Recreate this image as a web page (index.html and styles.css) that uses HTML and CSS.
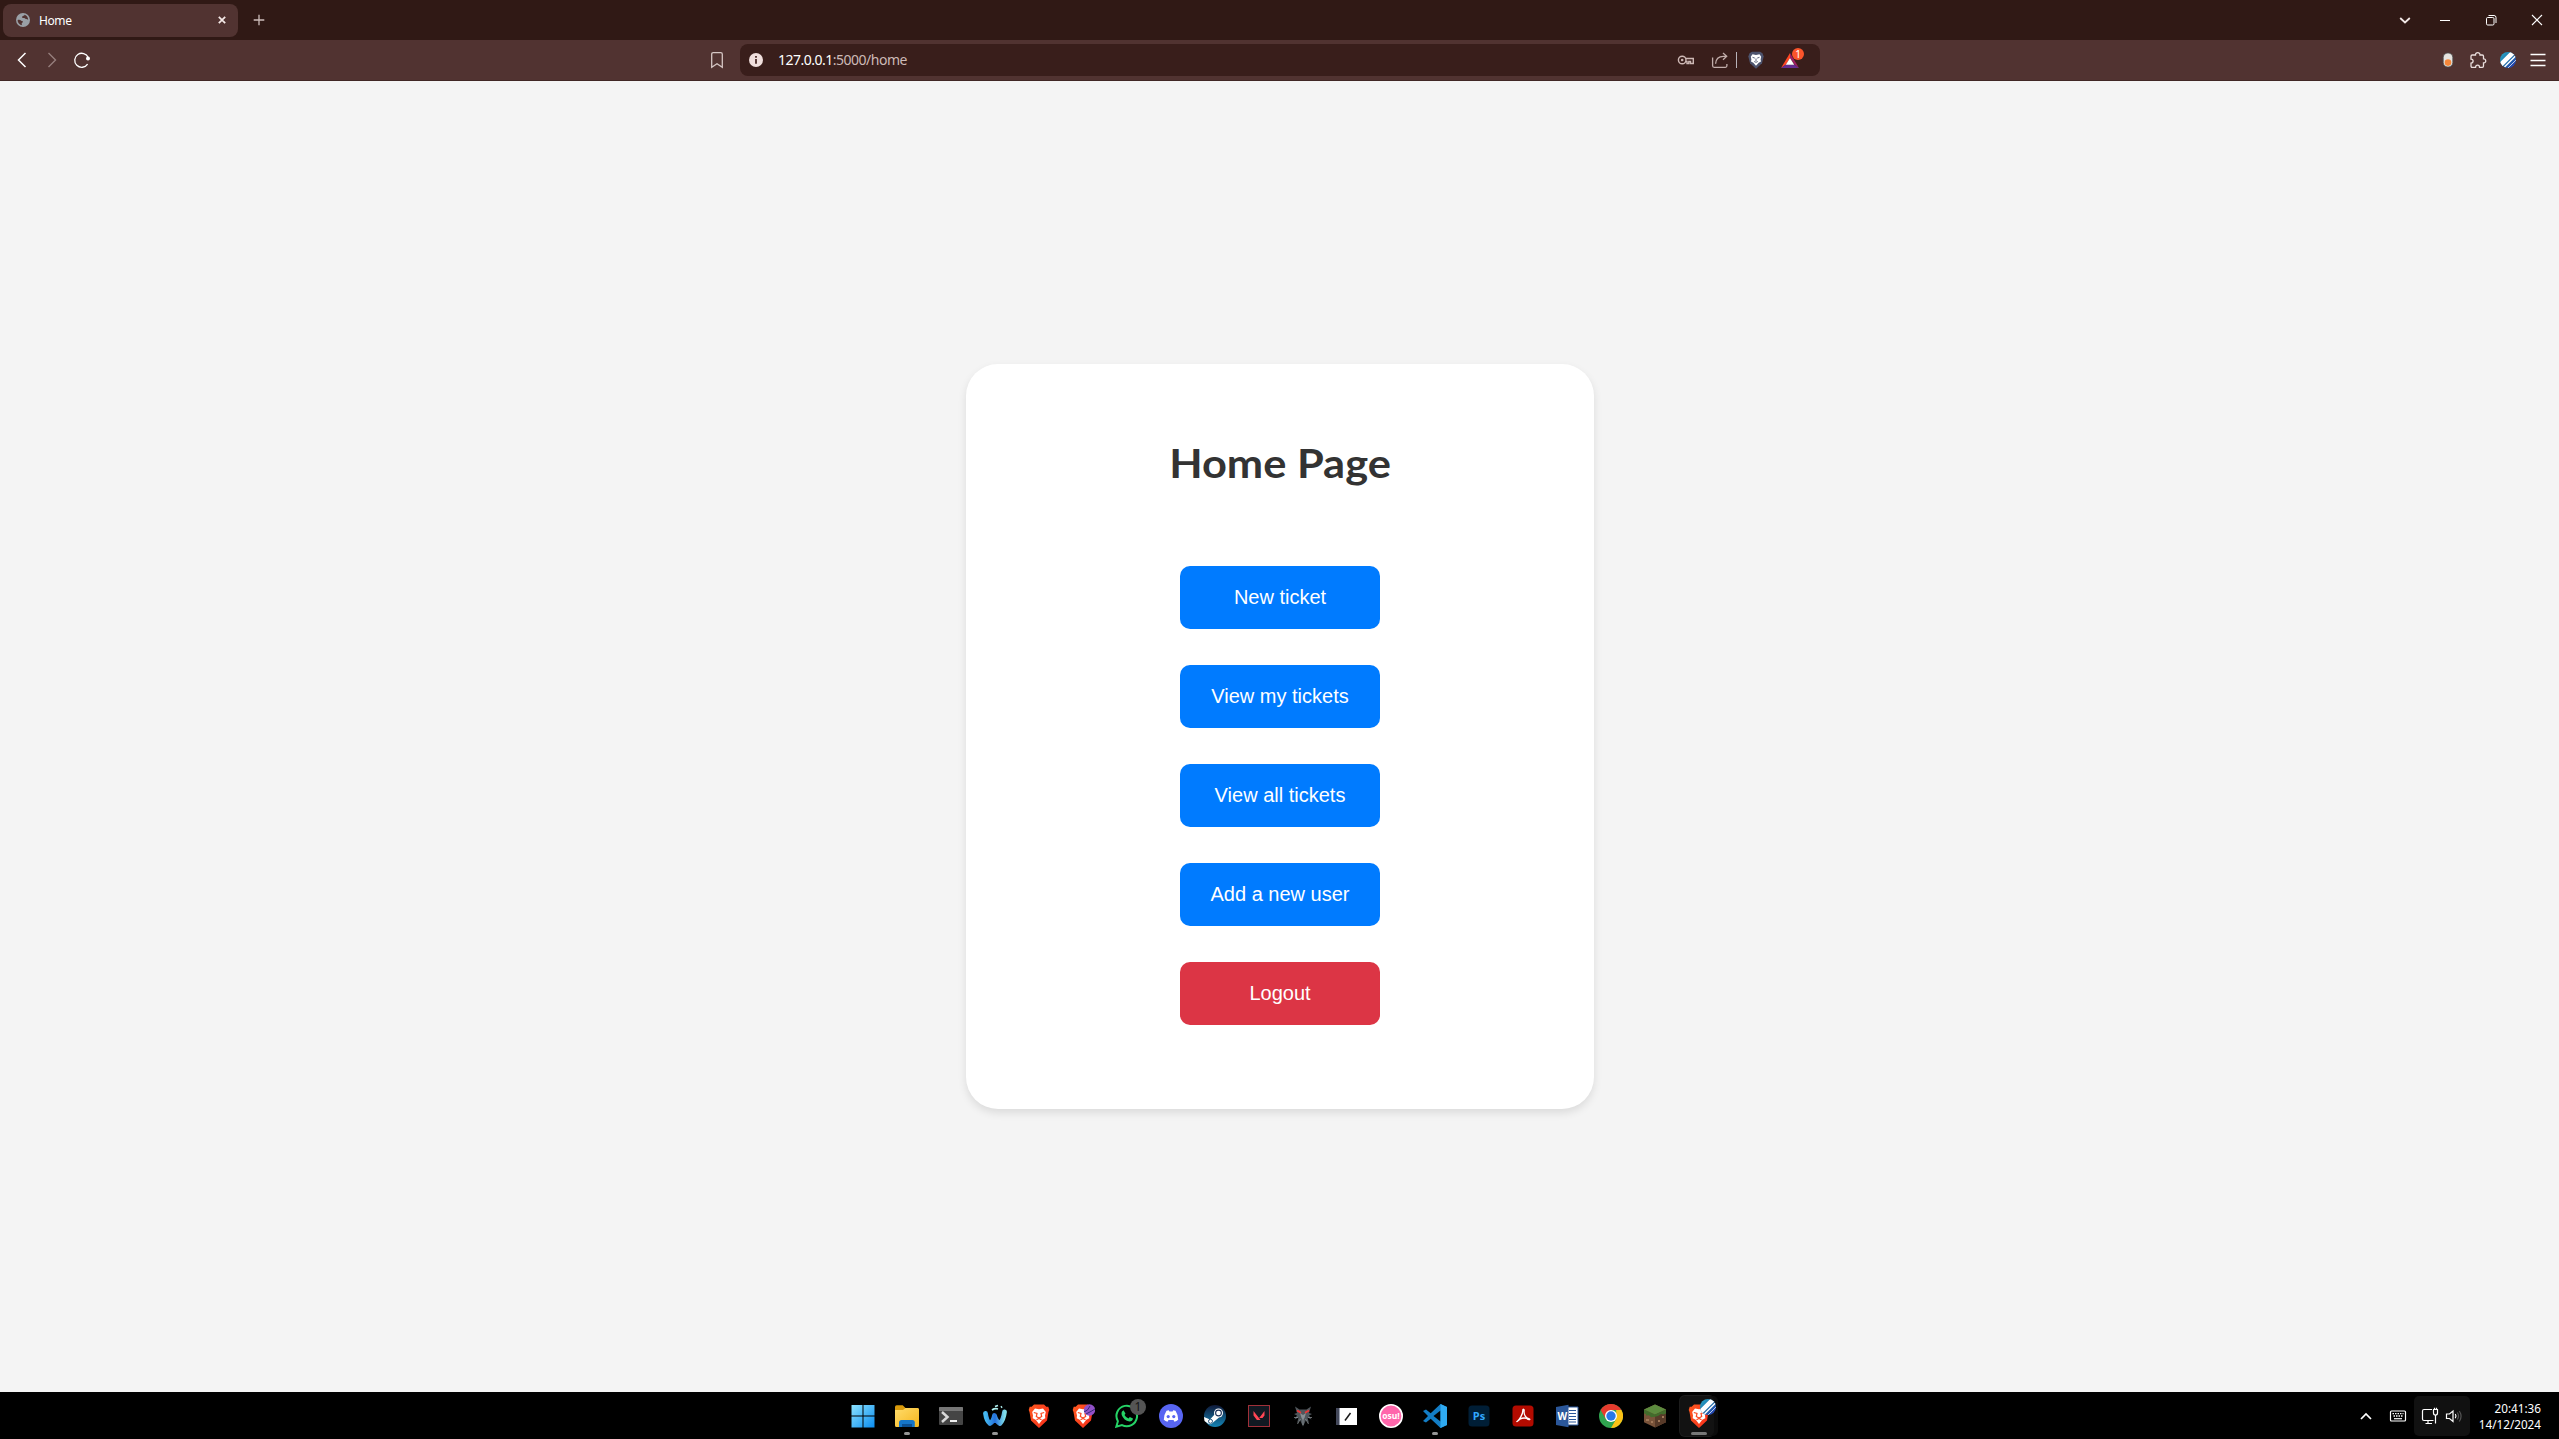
FILE: index.html
```
<!DOCTYPE html>
<html lang="en">
<head>
<meta charset="utf-8">
<title>Home</title>
<link rel="stylesheet" href="styles.css">
</head>
<body>
<header class="tabs">
  <div class="tab">
    <svg class="tab-icon" viewBox="0 0 14 14"><circle cx="7" cy="7" r="7" fill="#9aa0a6"/><path d="M1.600 7C3 6.600 4.300 6.700 5 7.500s1.900.3 1.900 1.300-1.200.9-1.200 1.900.3 1 .5 1.600C3.500 12 1.600 9.800 1.600 7zM8.600 1.800C8.300 3 7 2.800 6.300 3.600s.2 1.600 1.200 1.500c1-.1 1.300.6 2.200.8 1 .2 1.700.2 2.500.9-.2-2.500-1.500-4.300-3.600-5z" fill="#513331"/></svg>
    <span class="tab-title">Home</span>
    <svg class="tab-close" viewBox="0 0 8 8"><path d="M.8.8l6.400 6.400M7.200.8L.8 7.200" stroke="#f5e9e7" stroke-width="1.700"/></svg>
  </div>
  <svg class="new-tab" viewBox="0 0 12 12"><path d="M6 .7v10.600M.7 6h10.600" stroke="#cdbdbb" stroke-width="1.300"/></svg>
  <div class="controls">
    <svg viewBox="0 0 12 12"><path d="M1.200 4L6 8.500 10.800 4" fill="none" stroke="#f3e9e8" stroke-width="1.800"/></svg>
    <svg viewBox="0 0 12 12"><path d="M1 6.500h10" stroke="#fff"/></svg>
    <svg viewBox="0 0 12 12" fill="none" stroke="#fff"><rect x="1.500" y="3.500" width="7.500" height="7.500" rx="1.200"/><path d="M3.500 1.500H9a2 2 0 0 1 2 2V9"/></svg>
    <svg viewBox="0 0 12 12"><path d="M1 1l10 10M11 1L1 11" stroke="#fff" stroke-width="1.100"/></svg>
  </div>
</header>

<nav class="toolbar">
  <div class="nav-icons">
    <svg viewBox="0 0 18 18"><path d="M12.500 2L5.500 9l7 7" fill="none" stroke="#fff" stroke-width="1.500"/></svg>
    <svg viewBox="0 0 18 18"><path d="M5.500 2l7 7-7 7" fill="none" stroke="#967f7d" stroke-width="1.400"/></svg>
    <svg viewBox="0 0 18 18"><path d="M14.600 13.100A7 7 0 1 1 15.200 6.600" fill="none" stroke="#fff" stroke-width="1.300"/><circle cx="15" cy="7.600" r="2" fill="#fff"/></svg>
  </div>
  <svg class="bookmark" viewBox="0 0 18 18"><path d="M3.700 3.200q0-1.500 1.500-1.500h7.600q1.500 0 1.500 1.500v13L9 12.800l-5.300 3.400z" fill="none" stroke="#d5c6c4" stroke-width="1.300"/></svg>
  <div class="address">
    <svg class="info" viewBox="0 0 14 14"><circle cx="7" cy="7" r="7" fill="#f0dfdd"/><path d="M7 6v4.800M7 3v1.700" stroke="#4a2b28" stroke-width="1.800"/></svg>
    <span class="url"><b>127.0.0.1</b>:5000/home</span>
    <svg class="key" viewBox="0 0 18 18" fill="none" stroke="#cdb8b5" stroke-width="1.400"><circle cx="5.200" cy="9" r="3.800"/><circle cx="5.200" cy="9" r=".6" /><path d="M8.700 7.500h7.600v5h-2.800V10.500h-1.700v2H10v-2H8.700"/></svg>
    <svg class="share" viewBox="0 0 18 18" fill="none" stroke="#c2aeab" stroke-width="1.300"><path d="M1.600 6.500v8.300q0 1.500 1.500 1.500h11.300q1.500 0 1.500-1.500V13M4.600 12.800C4.800 8 8 5.300 12.500 5.300h3M12 1.900l3.700 3.400-3.700 3.500"/></svg>
    <i class="divider"></i>
    <svg class="shield" viewBox="0 0 18 18"><path d="M5 .8h8l2.500 1.500 1.200 3.200-1.700 6.800L9 17.800l-6-5.500L1.300 5.500l1.200-3.200z" fill="#4d536d"/><path d="M5.500 3.300L9 4l3.500-.7 1.700 2.500-.6 2.700.4 2-2.300 1.200L9 14.800l-2.700-3.100L4 10.500l.4-2-.6-2.700z" fill="#fff"/><path d="M5.500 6.300l2.300.8M12.500 6.300l-2.300.8M7.200 10.500L9 11.300l1.800-.8M9 7.500v2.500" fill="none" stroke="#4d536d" stroke-width=".9"/></svg>
    <svg class="rewards" viewBox="0 0 26 26"><path d="M11 6L2 21l5-3.500 4-6.500z" fill="#ff4724"/><path d="M2 21h18l-4.500-3.500H7z" fill="#662d91"/><path d="M11 6l9 15-4.500-3.500L11 11z" fill="#9e1f63"/><path d="M11 11l4.200 6.700H6.800z" fill="#fff"/><circle cx="19" cy="7" r="6" fill="#fb542b"/><text x="19" y="10.500" text-anchor="middle" class="badge-text">1</text></svg>
  </div>
  <div class="extensions">
    <svg viewBox="0 0 18 18"><rect x="4.200" y="2" width="9.600" height="14" rx="4.600" fill="#e5e3df" stroke="#4b5150" stroke-width=".8"/><circle cx="9" cy="11.600" r="3.300" fill="#f5873a"/></svg>
    <svg viewBox="0 0 18 18"><path d="M2 5.200q0-1.200 1.200-1.200H6.500C6.200.8 11.200.8 11 4h2.300q1.200 0 1.200 1.200v2.600c3-.2 3 4.400 0 4.200v3q0 1.300-1.200 1.300H10.500c0-2.800-3.800-2.800-3.900 0H3.200Q2 16.300 2 15v-2.800c2.800-.2 2.800-4 0-4.100z" fill="none" stroke="#eadfdd" stroke-width="1.300"/></svg>
    <svg viewBox="0 0 18 18"><use href="#profile"/></svg>
    <svg viewBox="0 0 18 18"><path d="M1.500 3.500h15M1.500 9.500h15M1.500 14.500h15" stroke="#fff" stroke-width="1.300"/></svg>
  </div>
</nav>

<main class="page">
  <section class="card">
    <h1>Home Page</h1>
    <div class="actions">
      <a class="btn">New ticket</a>
      <a class="btn">View my tickets</a>
      <a class="btn">View all tickets</a>
      <a class="btn">Add a new user</a>
      <a class="btn logout">Logout</a>
    </div>
  </section>
</main>

<footer class="taskbar">
  <svg class="defs" width="0" height="0">
    <defs>
      <linearGradient id="win" x2="1" y2="1"><stop stop-color="#8ce3ff"/><stop offset="1" stop-color="#0a8cf0"/></linearGradient>
      <linearGradient id="fold" x2="1" y2="1"><stop stop-color="#ffdc6b"/><stop offset="1" stop-color="#f5b51c"/></linearGradient>
      <linearGradient id="wave" x2="1"><stop stop-color="#45b8f0"/><stop offset=".5" stop-color="#2470dc"/><stop offset="1" stop-color="#7fdce9"/></linearGradient>
      <linearGradient id="orange" x2="1" y2=".6"><stop stop-color="#ff5a20"/><stop offset="1" stop-color="#f8331c"/></linearGradient>
      <linearGradient id="steamg" x2="0" y2="1"><stop stop-color="#101a3a"/><stop offset="1" stop-color="#1484b5"/></linearGradient>
      <linearGradient id="profg" x2="1" y2="1"><stop stop-color="#2aaed0"/><stop offset=".5" stop-color="#1c6fa5"/><stop offset="1" stop-color="#2a32b8"/></linearGradient>
      <clipPath id="round"><circle cx="9" cy="9" r="8"/></clipPath>
      <g id="profile"><circle cx="9" cy="9" r="8" fill="url(#profg)"/><g clip-path="url(#round)" stroke="#fff"><path d="M0 15.500L14.500 1" stroke-width="4.600"/><path d="M5.500 16L17 4.500" stroke-width="1.500"/><path d="M9 17L18 8" stroke-width=".7"/></g></g>
      <g id="lion"><path d="M7 .5h10l2.300 2.300 2-.1 1 3.300-.8 2-1.500 8.500L12 24l-8-7.500L2.500 8l-.8-2 1-3.300 2 .1z" fill="url(#orange)"/><path d="M8 4.500l4 .8 4-.8L18.800 8l-.8 3.500.3 2.700-3 1.600L12 20l-3.300-4.200-3-1.600.3-2.700L5.200 8z" fill="#fff"/><path d="M6.800 8.500l3.200 1-.7 3 2.700 1.500 2.700-1.500-.7-3 3.200-1M9.500 15.800l2.500-1.300 2.500 1.300" fill="none" stroke="#fb4922" stroke-width="1.200"/></g>
    </defs>
  </svg>
  <div class="apps">
    <div class="app"><svg viewBox="0 0 24 24"><path d="M.5 1H11.500V11.500H.5zM12.500 1H23.500V11.500H12.500zM.5 12.500H11.500V23.500H.5zM12.500 12.500H23.500V23.500H12.500z" fill="url(#win)"/></svg></div>
    <div class="app"><svg viewBox="0 0 24 24"><path d="M0 3q0-1.700 1.700-1.700h6L10.500 4H22q2 0 2 2v4H0z" fill="#d99a0b"/><path d="M0 6h8l2.500-2H22.500Q24 4 24 5.500v16q0 1.500-1.500 1.500h-21Q0 23 0 21.500z" fill="url(#fold)"/><path d="M4 23v-4.500Q4 16 6.500 16h10.800q2.500 0 2.500 2.500V23z" fill="#1575c8"/><path d="M7 20h10v3H7z" fill="#0c4f91"/></svg><i></i></div>
    <div class="app"><svg viewBox="0 0 24 24"><rect y="3" width="24" height="18" rx="1" fill="#454545"/><path d="M0 7V4q0-1 1-1h22q1 0 1 1v3z" fill="#777"/><path d="M3 8l5.500 5L3 18" fill="none" stroke="#d8d8d8" stroke-width="2.500"/><path d="M11 17h7" stroke="#f0f0f0" stroke-width="2"/></svg></div>
    <div class="app"><svg viewBox="0 0 24 24"><path d="M2.500 9.500Q3.500 17 7 19.500q3.500-2 4.500-8 1.500 6 5.500 8 3.500-4 4.500-11.500" fill="none" stroke="url(#wave)" stroke-width="4.800" stroke-linejoin="round" stroke-linecap="round"/><path d="M9 6q3-2 6-1M12 2.500l3-1M18 3.500l1-1" stroke="#b0f0f0" stroke-width="1.800" fill="none"/></svg><i></i></div>
    <div class="app"><svg viewBox="0 0 24 24"><use href="#lion"/></svg></div>
    <div class="app"><svg viewBox="0 0 24 24"><use href="#lion"/><circle cx="18.500" cy="6" r="5.700" fill="#9251c8"/><path d="M13 8q4-1 6-6M15 10q6-3 9-5" stroke="#352a76" fill="none"/></svg></div>
    <div class="app"><svg viewBox="0 0 24 24"><path d="M1.300 22.700l1.600-5.500A10.300 10.300 0 1 1 7 21.100z" fill="#000" stroke="#25d366" stroke-width="2"/><path d="M7 7.500l1.500-1.200L10.500 9.500l-1 1.400q1.400 2.600 4 3.600l1.300-1.500 3.200 1.600q-.5 3-3.500 3-5.700-1-7.800-6.500Q6.200 8.800 7 7.500z" fill="#25d366"/></svg><b class="count">1</b></div>
    <div class="app"><svg viewBox="0 0 24 24"><circle cx="12" cy="12" r="12" fill="#5865f2"/><path d="M7.500 6.800l2.300-.6.600 1.200h3.200l.6-1.200 2.300.6q2.700 4 2.700 9-1.700 1.400-3.700 1.900l-1-1.600h-5l-1 1.600q-2-.5-3.700-1.900 0-5 2.700-9z" fill="#fff"/><circle cx="9.200" cy="12.600" r="1.600" fill="#5865f2"/><circle cx="14.800" cy="12.600" r="1.600" fill="#5865f2"/></svg></div>
    <div class="app"><svg viewBox="0 0 24 24"><circle cx="12" cy="12" r="11" fill="url(#steamg)"/><path d="M1 13l6 2.500 5-5.500 4 3.500-6 5q-2 3-5 1L1.500 17z" fill="#fff"/><circle cx="15.500" cy="9" r="4.500" fill="#fff"/><circle cx="15.500" cy="9" r="2.900" fill="#fff" stroke="#1b3158" stroke-width="1.100"/><circle cx="7.500" cy="17.300" r="2" fill="none" stroke="#1b507b"/></svg></div>
    <div class="app"><svg viewBox="0 0 24 24"><rect x="1.500" y="1.500" width="21" height="21" fill="#111922" stroke="#a03039"/><path d="M6.500 7l7 9h-3.600l-3.400-4.500zM17.500 7v4.500L15.500 14h-3.300z" fill="#ff4655"/></svg></div>
    <div class="app"><svg viewBox="0 0 24 24"><path d="M4 2.500L8.500 5.500h7L20 2.500 18 9l3 1-3 1.500 2.500 4-4-2 1.500 6-3-3.500L12 22.500 9 16l-3 3.500 1.500-6-4 2 2.500-4L3 10l3-1z" fill="#50575c"/><path d="M9 9l3 2 3-2-1.500 5-1.500 2-1.500-2z" fill="#888f94"/><path d="M3 13.500h4M21 13.500h-4M6.500 20l3-5M17.500 20l-3-5M12 15v6" fill="none" stroke="#93999c" stroke-width=".7"/><path d="M6 6.500l4 2.300M18 6.500l-4 2.300" stroke="#f03434" stroke-width="1.700"/></svg></div>
    <div class="app"><svg viewBox="0 0 24 24"><path d="M1 4h21v17H1z" fill="#fff"/><path d="M1 4h3v17H1z" fill="#43485a"/><path d="M4.500 4v17" stroke="#9aa0b0"/><path d="M10 16.500l5.500-7.500" stroke="#181818" stroke-width="1.500"/></svg></div>
    <div class="app"><svg viewBox="0 0 24 24"><circle cx="12" cy="12" r="11.200" fill="#ff66ab" stroke="#fff" stroke-width="1.600"/><text class="osu" x="12" y="14.500" text-anchor="middle">osu!</text></svg></div>
    <div class="app"><svg viewBox="0 0 24 24"><path d="M17.500 0L24 3v18l-6.500 3L7.700 14.700 3 18.500 0 17l5-5-5-5 3-1.500 4.700 3.800z" fill="#137dc5"/><path d="M17.500 6.500v11L10.500 12z" fill="#000"/><path d="M17.500 0L24 3v18l-6.500 3z" fill="#2faaf1"/></svg><i></i></div>
    <div class="app"><svg viewBox="0 0 24 24"><rect x="1.500" y="1.500" width="21" height="21" rx="3.500" fill="#001e36"/><text class="ps" x="12" y="15.500" text-anchor="middle">Ps</text></svg></div>
    <div class="app"><svg viewBox="0 0 24 24"><rect x="1.500" y="1.500" width="21" height="21" rx="3.500" fill="#b30b00"/><path d="M6.500 17c1.500-1 5.500-6.500 5.300-10.500 0-2 1.700-1.500 1.300.5-.5 4 2 7 4.700 7.700 2.500.8-.2 1.700-2-.2-2-.8-4.800-.5-7 .8-2.300 2.400-4 2.700-2.300 1.700z" fill="none" stroke="#fff" stroke-width="1.300"/></svg></div>
    <div class="app"><svg viewBox="0 0 24 24"><path d="M12 3h11v18H12z" fill="#fff" stroke="#2b579a"/><path d="M14 6.500h7M14 9.500h7M14 12.500h7M14 15.500h7M14 18h7" stroke="#2b579a" stroke-width="1.200"/><path d="M1 3l12.500-2.300v22.600L1 21z" fill="#2b579a"/><text class="word" x="7.300" y="15.800" text-anchor="middle">W</text></svg></div>
    <div class="app"><svg viewBox="0 0 24 24"><circle cx="12" cy="12" r="12" fill="#30a44f"/><path d="M1.600 6A12 12 0 0 1 22.400 6H12z" fill="#e63b2e"/><path d="M1.600 6L6.800 15 12 6z" fill="#e63b2e"/><path d="M22.400 6A12 12 0 0 1 12 24l5.200-9V6z" fill="#fbc116"/><circle cx="12" cy="12" r="6" fill="#fff"/><circle cx="12" cy="12" r="4.700" fill="#2878e8"/></svg></div>
    <div class="app"><svg viewBox="0 0 24 24"><path d="M12 .5L23 5.500v12.800L12 23.500 1 18.300V5.500z" fill="#79533a"/><path d="M12 10.500l11-5v12.800l-11 5.200z" fill="#573a29"/><path d="M12 .5l11 5-11 5-11-5z" fill="#5c8b3e"/><path d="M1 5.500v4l2 .5v1.500l3-.3 2 2 4-.5 3-.7 3-2 2.500.5L23 9.500v-4l-11 5z" fill="#426c2c"/><path d="M3 15h3v2H3zM8 17h2v2H8zM15 16h2v2h-2zM19 12h2v2h-2z" fill="#a17859"/></svg></div>
    <div class="app active"><svg viewBox="0 0 24 24"><use href="#lion"/></svg><svg class="profile-badge" viewBox="0 0 18 18"><use href="#profile"/></svg><i></i></div>
  </div>
  <div class="tray">
    <svg viewBox="0 0 18 18"><path d="M4 12l5-5 5 5" fill="none" stroke="#fff" stroke-width="1.700"/></svg>
    <svg viewBox="0 0 18 18"><rect x="1.500" y="4" width="15" height="10" rx="1" fill="none" stroke="#fff" stroke-width="1.200"/><path d="M3.500 6.700h11M4.500 9h9" stroke="#fff" stroke-width="1.300" stroke-dasharray="1.500 1"/><path d="M5 11.700h8" stroke="#fff" stroke-width="1.200"/></svg>
    <div class="status">
      <svg viewBox="0 0 18 18" fill="none" stroke="#fff" stroke-width="1.200"><path d="M11 2.500H3Q1.500 2.500 1.500 4v8q0 1.500 1.500 1.500h9.500M14.500 8v8.500M7 13.500v3M4.500 16.500H11M12.500 2.500h4V6q0 2-2 2t-2-2zM13.500 .8v1.700M15.500 .8v1.700"/></svg>
      <svg viewBox="0 0 18 18" fill="none" stroke="#fff" stroke-width="1.200"><path d="M1.500 7h3L8 4v10.500L4.500 11.500h-3z"/><path d="M10.300 7q1.400 2 0 4.300"/><path d="M12.300 5.500q2.500 3.500 0 7M14.300 4q3.500 5.200 0 10.500" stroke="#555"/></svg>
    </div>
    <div class="clock"><span>20:41:36</span><span>14/12/2024</span></div>
  </div>
</footer>
</body>
</html>
```
FILE: styles.css
```
* { box-sizing: border-box; }
html, body { height: 100%; }
body {
  margin: 0;
  display: flex;
  flex-direction: column;
  overflow: hidden;
  background: #f4f4f4;
  font-family: "Noto Sans", "Open Sans", sans-serif;
}
svg { display: block; flex: none; }

/* Tab strip */
.tabs {
  height: 40px;
  flex: none;
  display: flex;
  align-items: center;
  padding: 0 0 0 3px;
  background: #301915;
}
.tab {
  width: 235px;
  height: 33px;
  display: flex;
  align-items: center;
  padding: 0 12px 0 13px;
  border-radius: 8px;
  background: #513331;
}
.tab-icon { width: 14px; height: 14px; }
.tab-title { flex: 1; padding-left: 9px; color: #fff; font-size: 12px; letter-spacing: -.4px; line-height: 16px; padding-top: 1px; }
.tab-close { width: 8px; height: 8px; }
.new-tab { width: 12px; height: 12px; margin-left: 15px; }
.controls { margin-left: auto; display: flex; padding-right: 16px; }
.controls svg { width: 12px; height: 12px; margin-left: 34px; }
.controls svg:first-child { margin: 0 -6px 0 0; }

/* Navigation bar */
.toolbar {
  height: 41px;
  flex: none;
  display: grid;
  grid-template-columns: 702px 30px 1080px 1fr;
  align-items: center;
  background: #513331;
  border-bottom: 1px solid #412725;
}
.nav-icons { display: flex; gap: 12px; padding-left: 13px; }
.nav-icons svg, .bookmark, .key, .share, .shield, .extensions svg { width: 18px; height: 18px; }
.bookmark { justify-self: center; }
.address {
  height: 32px;
  display: flex;
  align-items: center;
  padding: 0 11px 0 9px;
  margin: 0 -8px 0 8px;
  border-radius: 8px;
  background: #391e1b;
}
.info { width: 14px; height: 14px; }
.url { flex: 1; padding-left: 15px; font-size: 14px; letter-spacing: -.5px; line-height: 20px; color: #cdbab7; }
.url b { font-weight: 400; color: #fff; }
.share { margin: 0 7px 0 16px; }
.divider { width: 1px; height: 16px; background: #b8b3b9; }
.shield { margin: 0 14px 0 10px; }
.rewards { width: 26px; height: 26px; margin-right: 4px; }
.badge-text { font-size: 10px; fill: #fff; }
.extensions { display: flex; justify-content: flex-end; gap: 12px; padding-right: 12px; }

/* Page */
.page { flex: 1; min-height: 0; display: grid; place-items: center; }
.card {
  width: 628px;
  height: 745px;
  padding: 75px 0 0;
  border-radius: 32px;
  background: #fff;
  box-shadow: 0 4px 8px rgba(0, 0, 0, .1);
}
h1 {
  margin: 0 0 79px;
  color: #333;
  text-align: center;
  font: 700 40px/48px Lato, sans-serif;
  transform: scaleX(1.085);
}
.actions { display: grid; justify-content: center; gap: 36px; }
.btn {
  width: 200px;
  height: 63px;
  display: grid;
  place-items: center;
  padding-left: 1px;
  border-radius: 10px;
  background: #007bff;
  color: #fff;
  font: 20px/23px "Liberation Sans", Arial, sans-serif;
}
.logout { background: #dc3545; }

/* Taskbar */
.taskbar {
  height: 47px;
  flex: none;
  display: grid;
  grid-template-columns: 841px 880px 1fr;
  background: #000;
}
.defs { position: absolute; }
.apps { grid-column: 2; display: flex; }
.app { position: relative; width: 44px; height: 47px; display: grid; place-items: center; padding-top: 1px; }
.app > svg { width: 24px; height: 24px; }
.app > i {
  position: absolute;
  left: 19px;
  bottom: 4px;
  width: 6px;
  height: 3px;
  border-radius: 2px;
  background: #959595;
}
.app.active::before {
  content: "";
  position: absolute;
  left: 3px;
  top: 4px;
  width: 34px;
  height: 40px;
  border-radius: 5px;
  background: #121212;
  box-shadow: 4px 0 0 #0b0b0b, 0 0 0 1px #1c1c1c;
}
.app.active > svg { position: relative; }
.app.active > i { left: 14px; width: 16px; background: #777; }
.app.active > .profile-badge { position: absolute; left: 22px; top: 6px; width: 18px; height: 18px; }
.count {
  position: absolute;
  right: 3px;
  top: 7px;
  width: 16px;
  height: 16px;
  border-radius: 50%;
  background: #555;
  color: #151515;
  text-align: center;
  font: 12px/16px "Noto Sans", sans-serif;
}
.osu { font: 700 8.500px "Open Sans", sans-serif; fill: #fff; }
.ps { font: 700 11px "Open Sans", sans-serif; fill: #31a8ff; }
.word { font: 700 10px "Open Sans", sans-serif; fill: #fff; }
.tray { display: flex; align-items: center; justify-content: flex-end; padding-right: 18px; }
.tray svg { width: 18px; height: 18px; }
.tray > svg { margin-right: 14px; }
.tray > svg + svg { margin-right: 7px; }
.status {
  width: 56px;
  height: 40px;
  display: flex;
  align-items: center;
  justify-content: center;
  gap: 6px;
  border-radius: 5px;
  background: #111;
}
.clock {
  width: 71px;
  display: grid;
  text-align: right;
  color: #fff;
  font-size: 11.7px;
  line-height: 16px;
}
```
